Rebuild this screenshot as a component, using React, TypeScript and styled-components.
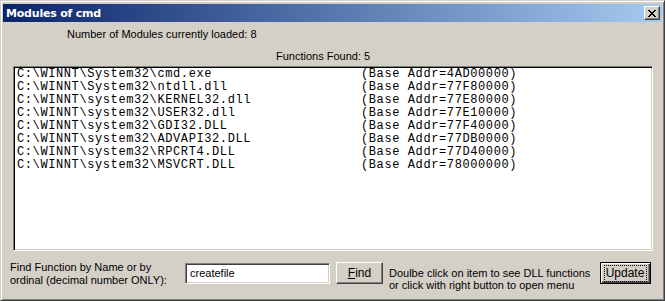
import styled, { createGlobalStyle } from "styled-components";

type Module = {
  path: string;
  base: string;
};

const modules: Module[] = [
  { path: "C:\\WINNT\\System32\\cmd.exe", base: "4AD00000" },
  { path: "C:\\WINNT\\System32\\ntdll.dll", base: "77F80000" },
  { path: "C:\\WINNT\\system32\\KERNEL32.dll", base: "77E80000" },
  { path: "C:\\WINNT\\system32\\USER32.dll", base: "77E10000" },
  { path: "C:\\WINNT\\system32\\GDI32.DLL", base: "77F40000" },
  { path: "C:\\WINNT\\system32\\ADVAPI32.DLL", base: "77DB0000" },
  { path: "C:\\WINNT\\system32\\RPCRT4.DLL", base: "77D40000" },
  { path: "C:\\WINNT\\system32\\MSVCRT.DLL", base: "78000000" },
];

const GlobalStyle = createGlobalStyle`
  html, body {
    margin: 0;
    padding: 0;
    background: #d4d0c8;
  }
  body {
    font-family: "Liberation Sans", Arial, sans-serif;
    font-size: 11px;
    color: #000;
  }
`;

const Window = styled.div`
  box-sizing: border-box;
  width: 665px;
  height: 301px;
  display: flex;
  flex-direction: column;
  padding: 2px;
  background: #d4d0c8;
  border: 1px solid;
  border-color: #d4d0c8 #404040 #404040 #d4d0c8;
  box-shadow: inset 1px 1px #ffffff, inset -1px -1px #808080;
`;

const TitleBar = styled.div`
  height: 18px;
  margin-top: 1px;
  display: flex;
  align-items: center;
  padding: 0 2px 0 3px;
  background: linear-gradient(to right, #0a246a, #a6caf0);
`;

const Title = styled.span`
  flex: 1;
  color: #fff;
  font-family: "DejaVu Sans", Tahoma, sans-serif;
  font-weight: bold;
  font-size: 11px;
  letter-spacing: -0.2px;
`;

const CloseButton = styled.div`
  box-sizing: border-box;
  width: 16px;
  height: 14px;
  display: flex;
  align-items: center;
  justify-content: center;
  background: #d4d0c8;
  border: 1px solid;
  border-color: #ffffff #404040 #404040 #ffffff;
  box-shadow: inset -1px -1px #808080;
`;

const Body = styled.div`
  flex: 1;
  display: flex;
  flex-direction: column;
`;

const Caption = styled.div<{ $indent: number; $top: number }>`
  line-height: 13px;
  height: 13px;
  margin-top: ${(p) => p.$top}px;
  padding-left: ${(p) => p.$indent}px;
  white-space: nowrap;
`;

const ListBox = styled.div`
  box-sizing: border-box;
  margin: 3px 9px 0 10px;
  height: 185px;
  background: #fff;
  border: 1px solid;
  border-color: #808080 #ffffff #ffffff #808080;
  box-shadow: inset 1px 1px #000, inset -1px -1px #d4d0c8;
  padding: 1px 3px;
  font-family: "Liberation Mono", "Courier New", monospace;
  font-size: 12px;
  letter-spacing: 0.6px;
  line-height: 13px;
`;

const ListRow = styled.div`
  display: grid;
  grid-template-columns: 344px auto;
  white-space: pre;
`;

const BottomRow = styled.div`
  display: flex;
  align-items: flex-start;
  padding: 0 11px 0 7px;
`;

const FindLabel = styled.div`
  width: 175px;
  margin-top: 10px;
  line-height: 13px;
`;

const TextInput = styled.div`
  box-sizing: border-box;
  width: 145px;
  height: 21px;
  margin-top: 12px;
  padding: 3px 4px;
  background: #fff;
  border: 1px solid;
  border-color: #808080 #ffffff #ffffff #808080;
  box-shadow: inset 1px 1px #404040, inset -1px -1px #d4d0c8;
  line-height: 13px;
`;

const Button = styled.div<{ $width: number; $isDefault?: boolean }>`
  box-sizing: border-box;
  width: ${(p) => p.$width}px;
  height: 22px;
  margin-top: 11px;
  display: flex;
  align-items: center;
  justify-content: center;
  background: #d4d0c8;
  border: 1px solid;
  border-color: ${(p) =>
    p.$isDefault ? "#000" : "#ffffff #404040 #404040 #ffffff"};
  box-shadow: ${(p) =>
    p.$isDefault
      ? "inset 1px 1px #fff, inset -1px -1px #404040, inset -2px -2px #808080"
      : "inset -1px -1px #808080"};
  font-size: 12px;
`;

const FindButton = styled(Button)`
  margin-left: 6px;
`;

const FocusRing = styled.span`
  padding: 1px 2px 1px 1px;
  outline: 1px dotted #000;
  line-height: 13px;
`;

const Hint = styled.div`
  margin: 16px 0 0 6px;
  line-height: 12px;
  font-size: 11px;
`;

const Spacer = styled.div`
  flex: 1;
`;

export default function App() {
  return (
    <>
      <GlobalStyle />
      <Window>
        <TitleBar>
          <Title>Modules of cmd</Title>
          <CloseButton>
            <svg width="8" height="7" viewBox="0 0 8 7" shapeRendering="crispEdges">
              <path
                d="M0 0h2v1H0zM6 0h2v1H6zM1 1h2v1H1zM5 1h2v1H5zM2 2h4v1H2zM3 3h2v1H3zM2 4h4v1H2zM1 5h2v1H1zM5 5h2v1H5zM0 6h2v1H0zM6 6h2v1H6z"
                fill="#000"
              />
            </svg>
          </CloseButton>
        </TitleBar>
        <Body>
          <Caption $indent={64} $top={6}>
            Number of Modules currently loaded: {modules.length}
          </Caption>
          <Caption $indent={273} $top={9}>
            Functions Found: 5
          </Caption>
          <ListBox>
            {modules.map((m) => (
              <ListRow key={m.path}>
                <span>{m.path}</span>
                <span>(Base Addr={m.base})</span>
              </ListRow>
            ))}
          </ListBox>
          <BottomRow>
            <FindLabel>
              Find Function by Name or by
              <br />
              ordinal (decimal number ONLY):
            </FindLabel>
            <TextInput>createfile</TextInput>
            <FindButton $width={47}>
              <span>
                <u>F</u>ind
              </span>
            </FindButton>
            <Hint>
              Doulbe click on item to see DLL functions
              <br />
              or click with right button to open menu
            </Hint>
            <Spacer />
            <Button $width={51} $isDefault>
              <FocusRing>Update</FocusRing>
            </Button>
          </BottomRow>
        </Body>
      </Window>
    </>
  );
}
